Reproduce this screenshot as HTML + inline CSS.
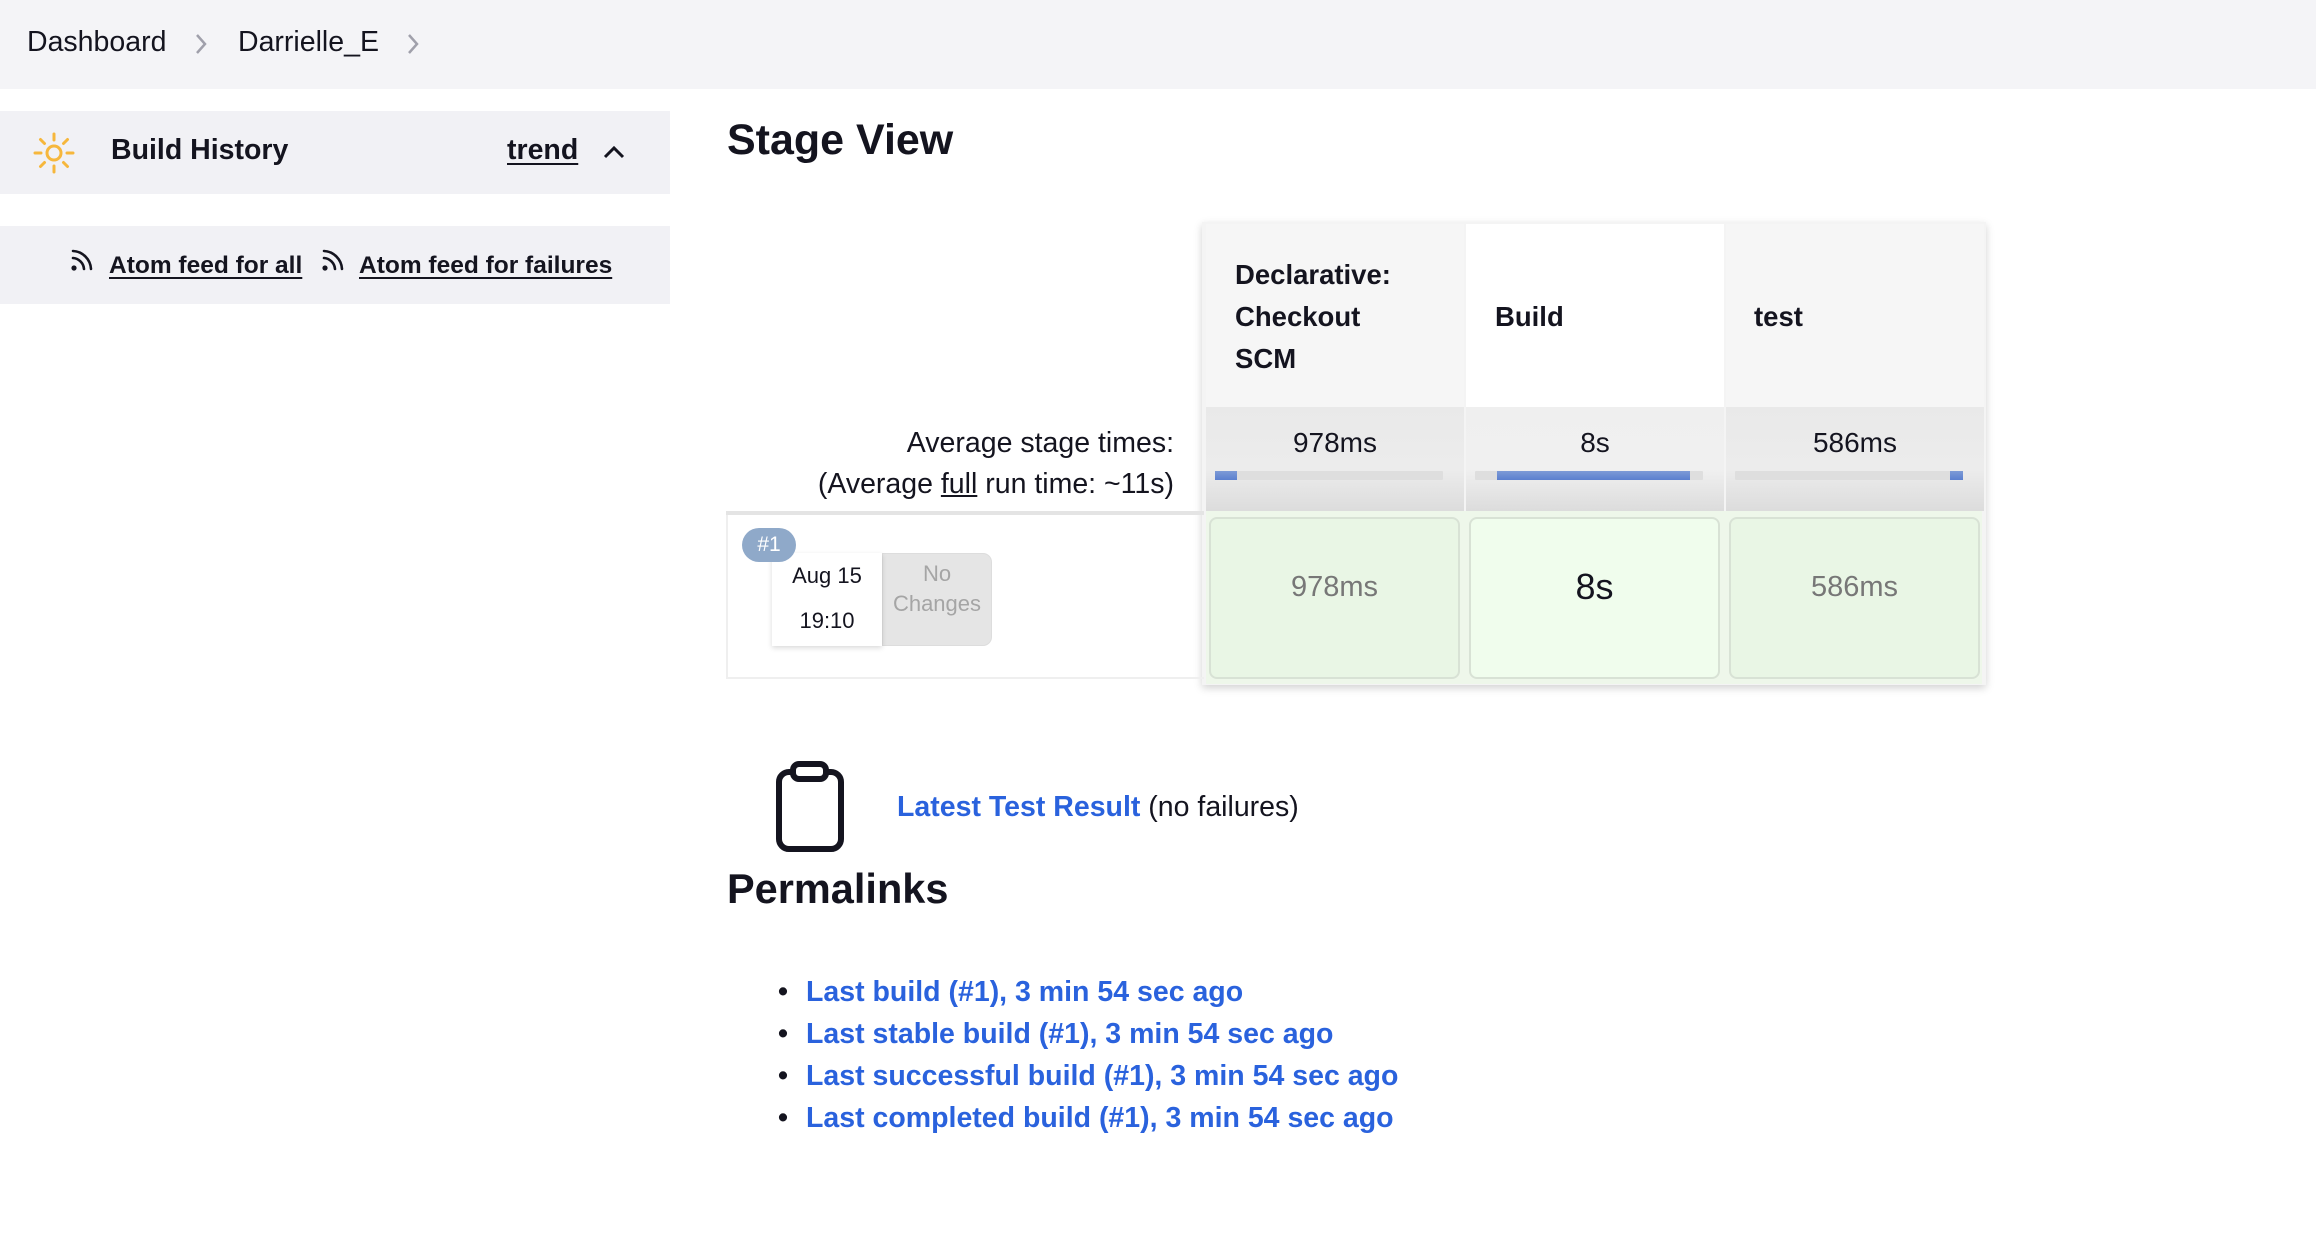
<!DOCTYPE html>
<html><head><meta charset="utf-8">
<style>
*{margin:0;padding:0;box-sizing:border-box}
body{width:2316px;height:1244px;background:#fff;font-family:"Liberation Sans",sans-serif;color:#14141f;position:relative;overflow:hidden}
.abs{position:absolute;white-space:nowrap}
.hdr{position:absolute;left:0;top:0;width:2316px;height:89px;background:#f4f4f7}
.panel{position:absolute;left:0;width:670px;background:#f1f1f5}
a{color:inherit}
.blue{color:#2a62dd}
.cell{position:absolute;width:258px}
.bar{position:absolute;height:9px;background:#dedede;border-radius:1px}
.fill{position:absolute;height:9px;background:linear-gradient(#7d9ad6,#5b7fcf);top:0}
.g{position:absolute;top:517px;height:162px;width:251px;border:2px solid #d8e2d5;border-radius:8px;background:#e9f6e5;display:flex;align-items:center;justify-content:center;font-size:29px;color:#777;padding-bottom:22px}
</style></head><body>
<div class="hdr"></div>
<div class="abs" style="left:27px;top:25px;font-size:28.5px;line-height:34px">Dashboard</div>
<svg class="abs" style="left:194px;top:33px" width="14" height="22"><path d="M3 2 L11 11 L3 20" fill="none" stroke="#a0a0ab" stroke-width="2.5"/></svg>
<div class="abs" style="left:238px;top:25px;font-size:28.5px;line-height:34px">Darrielle_E</div>
<svg class="abs" style="left:406px;top:33px" width="14" height="22"><path d="M3 2 L11 11 L3 20" fill="none" stroke="#a0a0ab" stroke-width="2.5"/></svg>

<div class="panel" style="top:111px;height:83px"></div>
<svg class="abs" style="left:30px;top:129px" width="48" height="48" viewBox="0 0 48 48">
<g stroke="#f6b73c" stroke-width="3" fill="none" stroke-linecap="round">
<circle cx="24" cy="24" r="7"/>
<path d="M24 5v6M24 37v6M5 24h6M37 24h6M10.5 10.5l4 4M33.5 33.5l4 4M37.5 10.5l-4 4M14.5 33.5l-4 4"/>
</g></svg>
<div class="abs" style="left:111px;top:132px;font-size:28.5px;font-weight:bold;line-height:36px">Build History</div>
<div class="abs" style="left:507px;top:132px;font-size:28.5px;font-weight:bold;line-height:36px;text-decoration:underline;text-underline-offset:4px">trend</div>
<svg class="abs" style="left:602px;top:143px" width="24" height="18"><path d="M3 14 L12 5 L21 14" fill="none" stroke="#14141f" stroke-width="3"/></svg>

<div class="panel" style="top:226px;height:78px"></div>
<svg class="abs" style="left:70px;top:247px" width="26" height="26" viewBox="0 0 26 26"><g fill="none" stroke="#14141f" stroke-width="2.6" stroke-linecap="round"><path d="M3 4 a19 19 0 0 1 18 18"/><path d="M3 11 a12 12 0 0 1 11 11"/></g><circle cx="4" cy="21" r="2.6" fill="#14141f"/></svg>
<div class="abs" style="left:109px;top:251px;font-size:24.5px;line-height:30px;font-weight:bold;text-decoration:underline;text-underline-offset:4px">Atom feed for all</div>
<svg class="abs" style="left:321px;top:247px" width="26" height="26" viewBox="0 0 26 26"><g fill="none" stroke="#14141f" stroke-width="2.6" stroke-linecap="round"><path d="M3 4 a19 19 0 0 1 18 18"/><path d="M3 11 a12 12 0 0 1 11 11"/></g><circle cx="4" cy="21" r="2.6" fill="#14141f"/></svg>
<div class="abs" style="left:359px;top:251px;font-size:24.5px;line-height:30px;font-weight:bold;text-decoration:underline;text-underline-offset:4px">Atom feed for failures</div>

<div class="abs" style="left:727px;top:114px;font-size:43px;font-weight:bold;line-height:52px">Stage View</div>

<!-- table -->
<div class="abs" style="left:1202px;top:222px;width:784px;height:463px;box-shadow:0 3px 8px rgba(0,0,0,.18);background:#f4f4f4"></div>
<div class="cell" style="left:1206px;top:224px;height:183px;background:#f6f6f6"></div>
<div class="cell" style="left:1466px;top:224px;height:183px;background:#fff"></div>
<div class="cell" style="left:1726px;top:224px;height:183px;background:#f6f6f6"></div>
<div class="abs" style="left:1235px;top:254px;font-size:27.5px;font-weight:bold;line-height:42px;white-space:normal">Declarative:<br>Checkout<br>SCM</div>
<div class="abs" style="left:1495px;top:296px;font-size:27.5px;font-weight:bold;line-height:42px">Build</div>
<div class="abs" style="left:1754px;top:296px;font-size:27.5px;font-weight:bold;line-height:42px">test</div>

<div class="cell" style="left:1206px;top:407px;height:104px;background:linear-gradient(#e9e9e9 0,#ececec 60%,#dcdcdc 100%)"></div>
<div class="cell" style="left:1466px;top:407px;height:104px;background:linear-gradient(#efefef 0,#f0f0f0 60%,#dcdcdc 100%)"></div>
<div class="cell" style="left:1726px;top:407px;height:104px;background:linear-gradient(#e9e9e9 0,#ececec 60%,#dcdcdc 100%)"></div>
<div class="abs" style="left:1206px;width:258px;text-align:center;top:426px;font-size:28px;line-height:34px">978ms</div>
<div class="abs" style="left:1466px;width:258px;text-align:center;top:426px;font-size:28px;line-height:34px">8s</div>
<div class="abs" style="left:1726px;width:258px;text-align:center;top:426px;font-size:28px;line-height:34px">586ms</div>
<div class="bar" style="left:1215px;top:471px;width:228px"><div class="fill" style="left:0;width:22px"></div></div>
<div class="bar" style="left:1475px;top:471px;width:228px"><div class="fill" style="left:22px;width:193px"></div></div>
<div class="bar" style="left:1735px;top:471px;width:228px"><div class="fill" style="left:215px;width:13px"></div></div>

<div class="abs" style="left:1206px;top:511px;width:776px;height:173px;background:#eef7ea"></div>
<div class="g" style="left:1209px">978ms</div>
<div class="g" style="left:1469px;background:#f0fded;color:#14141f;font-size:36px">8s</div>
<div class="g" style="left:1729px">586ms</div>

<div class="abs" style="left:800px;width:374px;text-align:right;top:426px;font-size:28.5px;line-height:34px">Average stage times:</div>
<div class="abs" style="left:700px;width:474px;text-align:right;top:467px;font-size:28.5px;line-height:34px">(Average <span style="text-decoration:underline">full</span> run time: ~11s)</div>
<div class="abs" style="left:726px;top:511px;width:478px;height:4px;background:#e4e4e4"></div>
<div class="abs" style="left:726px;top:515px;width:478px;height:164px;border:2px solid #efefef;border-top:none;border-right:none"></div>
<div class="abs" style="left:882px;top:553px;width:110px;height:93px;background:#e5e5e5;border-radius:0 9px 9px 0;border:1px solid #ddd;color:#a5a5a5;font-size:22px;line-height:30px;text-align:center;padding-top:5px;white-space:normal">No<br>Changes</div>
<div class="abs" style="left:772px;top:553px;width:110px;height:93px;background:#fff;box-shadow:0 2px 5px rgba(0,0,0,.15);font-size:22px;line-height:45px;text-align:center;padding-top:0">Aug 15<br>19:10</div>
<div class="abs" style="left:742px;top:528px;width:54px;height:34px;border-radius:17px;background:#8fa9c9;color:#fff;font-size:21px;line-height:34px;text-align:center">#1</div>

<svg class="abs" style="left:770px;top:760px" width="80" height="96" viewBox="0 0 80 96">
<g fill="none" stroke="#14141f" stroke-width="6" stroke-linejoin="round">
<rect x="9" y="12" width="62" height="77" rx="10"/>
<rect x="23" y="4" width="33" height="15" rx="6" fill="#fff"/>
</g></svg>
<div class="abs" style="left:897px;top:789px;font-size:28.5px;line-height:36px"><span class="blue" style="font-weight:bold">Latest Test Result</span> (no failures)</div>

<div class="abs" style="left:727px;top:864px;font-size:41.5px;font-weight:bold;line-height:50px">Permalinks</div>
<div class="abs" style="left:778px;top:971px;font-size:28.5px;line-height:42px;font-weight:bold">
<div><span style="display:inline-block;width:28px">&#8226;</span><span class="blue">Last build (#1), 3 min 54 sec ago</span></div>
<div><span style="display:inline-block;width:28px">&#8226;</span><span class="blue">Last stable build (#1), 3 min 54 sec ago</span></div>
<div><span style="display:inline-block;width:28px">&#8226;</span><span class="blue">Last successful build (#1), 3 min 54 sec ago</span></div>
<div><span style="display:inline-block;width:28px">&#8226;</span><span class="blue">Last completed build (#1), 3 min 54 sec ago</span></div>
</div>
</body></html>
